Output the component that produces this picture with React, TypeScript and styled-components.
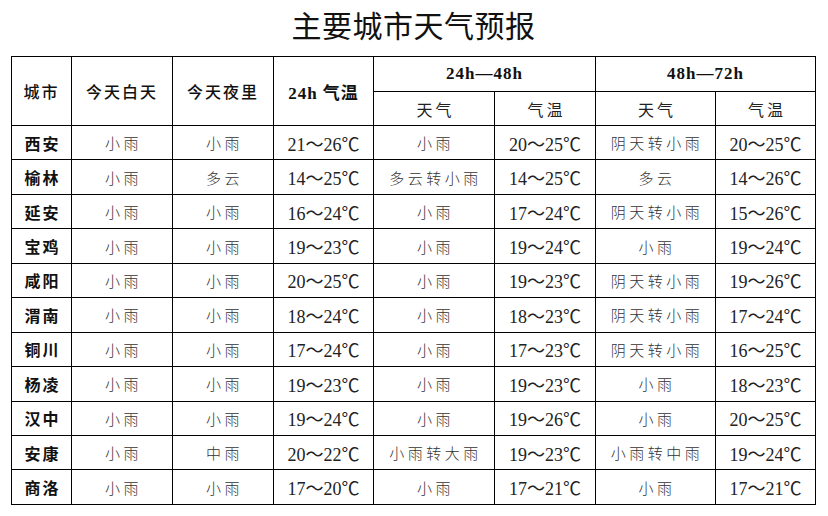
import React from "react";
import styled, { createGlobalStyle } from "styled-components";

const GlobalStyle = createGlobalStyle`
  html, body {
    margin: 0;
    padding: 0;
    background: #fff;
  }
  body {
    font-family: "Liberation Serif", "Noto Sans CJK SC", serif;
    color: #000;
  }
`;

const Page = styled.div`
  width: 828px;
  height: 516px;
  display: flex;
  flex-direction: column;
  align-items: flex-start;
  padding-left: 11px;
  box-sizing: border-box;
`;

const Title = styled.h1`
  margin: 0;
  width: 805px;
  height: 56px;
  padding-bottom: 8px;
  box-sizing: border-box;
  display: flex;
  align-items: center;
  justify-content: center;
  font-family: "Noto Sans CJK SC", sans-serif;
  font-weight: 400;
  font-size: 30px;
  letter-spacing: 0.5px;
  color: #111;
`;

const Table = styled.table`
  border-collapse: collapse;
  table-layout: fixed;
  width: 805px;
  border: 1px solid #000;
`;

const HeadRow = styled.tr<{ $h: number }>`
  height: ${(p) => p.$h}px;
`;

const Row = styled.tr`
  height: 34.45px;
`;

const HeadCell = styled.th<{ $mono?: boolean }>`
  border: 1px solid #000;
  padding: 0;
  text-align: center;
  vertical-align: middle;
  font-family: ${(p) =>
    p.$mono
      ? `"Liberation Serif", "Noto Sans CJK SC", serif`
      : `"Noto Sans CJK SC", sans-serif`};
  font-weight: ${(p) => (p.$mono ? 700 : 500)};
  font-size: ${(p) => (p.$mono ? 17 : 16)}px;
  letter-spacing: ${(p) => (p.$mono ? 1 : 2)}px;
  color: #111;
`;

const SubHead = styled.th`
  border: 1px solid #000;
  padding: 0;
  text-align: center;
  font-family: "Noto Sans CJK SC", sans-serif;
  font-weight: 400;
  font-size: 16px;
  letter-spacing: 3px;
  text-indent: 3px;
  color: #222;
`;

const CityCell = styled.td`
  border: 1px solid #000;
  padding: 0;
  text-align: center;
  font-family: "Noto Sans CJK SC", sans-serif;
  font-weight: 700;
  font-size: 16px;
  letter-spacing: 2px;
  text-indent: 2px;
  color: #111;
`;

const WeatherCell = styled.td`
  border: 1px solid #000;
  padding: 0;
  text-align: center;
  font-family: "Noto Sans CJK SC", sans-serif;
  font-weight: 300;
  font-size: 15px;
  letter-spacing: 3.5px;
  text-indent: 3px;
  color: #333;
  white-space: nowrap;
`;

const TempCell = styled.td`
  border: 1px solid #000;
  padding: 0;
  text-align: center;
  font-family: "Liberation Serif", "Noto Sans CJK SC", serif;
  font-size: 18px;
  color: #222;
  white-space: nowrap;
`;

type CityRow = {
  city: string;
  day: string;
  night: string;
  t24: string;
  w48: string;
  t48: string;
  w72: string;
  t72: string;
};

const rows: CityRow[] = [
  { city: "西安", day: "小雨", night: "小雨", t24: "21～26℃", w48: "小雨", t48: "20～25℃", w72: "阴天转小雨", t72: "20～25℃" },
  { city: "榆林", day: "小雨", night: "多云", t24: "14～25℃", w48: "多云转小雨", t48: "14～25℃", w72: "多云", t72: "14～26℃" },
  { city: "延安", day: "小雨", night: "小雨", t24: "16～24℃", w48: "小雨", t48: "17～24℃", w72: "阴天转小雨", t72: "15～26℃" },
  { city: "宝鸡", day: "小雨", night: "小雨", t24: "19～23℃", w48: "小雨", t48: "19～24℃", w72: "小雨", t72: "19～24℃" },
  { city: "咸阳", day: "小雨", night: "小雨", t24: "20～25℃", w48: "小雨", t48: "19～23℃", w72: "阴天转小雨", t72: "19～26℃" },
  { city: "渭南", day: "小雨", night: "小雨", t24: "18～24℃", w48: "小雨", t48: "18～23℃", w72: "阴天转小雨", t72: "17～24℃" },
  { city: "铜川", day: "小雨", night: "小雨", t24: "17～24℃", w48: "小雨", t48: "17～23℃", w72: "阴天转小雨", t72: "16～25℃" },
  { city: "杨凌", day: "小雨", night: "小雨", t24: "19～23℃", w48: "小雨", t48: "19～23℃", w72: "小雨", t72: "18～23℃" },
  { city: "汉中", day: "小雨", night: "小雨", t24: "19～24℃", w48: "小雨", t48: "19～26℃", w72: "小雨", t72: "20～25℃" },
  { city: "安康", day: "小雨", night: "中雨", t24: "20～22℃", w48: "小雨转大雨", t48: "19～23℃", w72: "小雨转中雨", t72: "19～24℃" },
  { city: "商洛", day: "小雨", night: "小雨", t24: "17～20℃", w48: "小雨", t48: "17～21℃", w72: "小雨", t72: "17～21℃" },
];

const widths = [60, 101, 101, 100, 121, 101, 120, 100];

const App = () => {
  return (
    <>
      <GlobalStyle />
      <Page>
        <Title>主要城市天气预报</Title>
        <Table>
          <colgroup>
            {widths.map((w, i) => (
              <col key={`col-${i}`} style={{ width: w }} />
            ))}
          </colgroup>
          <thead>
            <HeadRow $h={35}>
              <HeadCell rowSpan={2}>城市</HeadCell>
              <HeadCell rowSpan={2}>今天白天</HeadCell>
              <HeadCell rowSpan={2}>今天夜里</HeadCell>
              <HeadCell rowSpan={2} $mono>
                24h 气温
              </HeadCell>
              <HeadCell colSpan={2} $mono>
                24h—48h
              </HeadCell>
              <HeadCell colSpan={2} $mono>
                48h—72h
              </HeadCell>
            </HeadRow>
            <HeadRow $h={34}>
              <SubHead>天气</SubHead>
              <SubHead>气温</SubHead>
              <SubHead>天气</SubHead>
              <SubHead>气温</SubHead>
            </HeadRow>
          </thead>
          <tbody>
            {rows.map((r) => (
              <Row key={r.city}>
                <CityCell>{r.city}</CityCell>
                <WeatherCell>{r.day}</WeatherCell>
                <WeatherCell>{r.night}</WeatherCell>
                <TempCell>{r.t24}</TempCell>
                <WeatherCell>{r.w48}</WeatherCell>
                <TempCell>{r.t48}</TempCell>
                <WeatherCell>{r.w72}</WeatherCell>
                <TempCell>{r.t72}</TempCell>
              </Row>
            ))}
          </tbody>
        </Table>
      </Page>
    </>
  );
};

export default App;
